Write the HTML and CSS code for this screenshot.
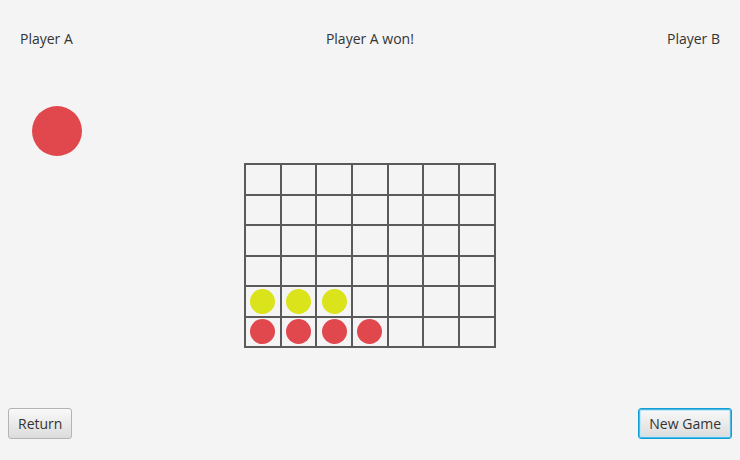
FILE: index.html
```html
<!DOCTYPE html>
<html>
<head>
<meta charset="utf-8">
<link rel="stylesheet" href="styles.css">
</head>
<body>
<div class="app">
  <header class="top">
    <span class="label">Player A</span>
    <span class="label">Player A won!</span>
    <span class="label">Player B</span>
  </header>
  <main class="middle">
    <div class="side">
      <div class="turn-piece red"></div>
    </div>
    <div class="board">
      <div class="cell"></div><div class="cell"></div><div class="cell"></div><div class="cell"></div><div class="cell"></div><div class="cell"></div><div class="cell"></div>
      <div class="cell"></div><div class="cell"></div><div class="cell"></div><div class="cell"></div><div class="cell"></div><div class="cell"></div><div class="cell"></div>
      <div class="cell"></div><div class="cell"></div><div class="cell"></div><div class="cell"></div><div class="cell"></div><div class="cell"></div><div class="cell"></div>
      <div class="cell"></div><div class="cell"></div><div class="cell"></div><div class="cell"></div><div class="cell"></div><div class="cell"></div><div class="cell"></div>
      <div class="cell"><span class="disc yellow"></span></div><div class="cell"><span class="disc yellow"></span></div><div class="cell"><span class="disc yellow"></span></div><div class="cell"></div><div class="cell"></div><div class="cell"></div><div class="cell"></div>
      <div class="cell"><span class="disc red"></span></div><div class="cell"><span class="disc red"></span></div><div class="cell"><span class="disc red"></span></div><div class="cell"><span class="disc red"></span></div><div class="cell"></div><div class="cell"></div><div class="cell"></div>
    </div>
  </main>
  <footer class="bottom">
    <button class="btn">Return</button>
    <button class="btn focused">New Game</button>
  </footer>
</div>
</body>
</html>
```
FILE: styles.css
```css
html, body {
  margin: 0;
  padding: 0;
  background: #f4f4f4;
}
.app {
  width: 740px;
  height: 460px;
  display: flex;
  flex-direction: column;
  font-family: "Open Sans", "Noto Sans", sans-serif;
  font-size: 14px;
  color: #333;
}
.top {
  display: flex;
  justify-content: space-between;
  align-items: center;
  padding: 30px 20px 0 20px;
  height: 18px;
  line-height: 18px;
}
.middle {
  flex: 1;
  display: grid;
  grid-template-columns: 244px auto;
  align-items: start;
}
.side {
  padding: 58px 0 0 32px;
}
.turn-piece {
  width: 50px;
  height: 50px;
  border-radius: 50%;
}
.red { background: #e0484d; }
.yellow { background: #dbe31a; }
.board {
  margin-top: 115px;
  display: grid;
  grid-template-columns: repeat(7, 33.7px);
  grid-template-rows: repeat(6, 28.5px);
  gap: 2px;
  padding: 2px;
  background: #5a5a5a;
  justify-self: start;
}
.cell {
  background: #f4f4f4;
  display: flex;
  align-items: center;
  justify-content: center;
}
.disc {
  width: 25px;
  height: 25px;
  border-radius: 50%;
}
.bottom {
  display: flex;
  justify-content: space-between;
  padding: 0 8px 21px 8px;
}
.btn {
  height: 31px;
  padding: 0 9px;
  font-family: "Open Sans", "Noto Sans", sans-serif;
  font-size: 14px;
  color: #333;
  border: 1px solid #b4b4b4;
  border-radius: 3px;
  background: linear-gradient(#f9f9f9, #dcdcdc);
}
.btn.focused {
  padding: 0 10px;
  border-color: #0f9ed6;
  box-shadow: inset 0 0 0 1px #4fb8e2, inset 0 0 0 2px #c4e7f5;
}
```
